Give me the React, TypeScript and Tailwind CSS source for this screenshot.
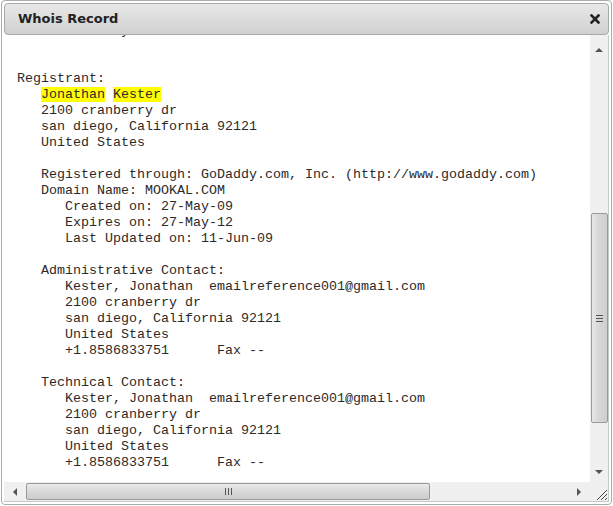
import React from 'react'

const mono = { fontFamily: '"Liberation Mono", "Courier New", monospace' }

type Line = string | React.ReactNode

const lines: Line[] = [
  '             y',
  '',
  '',
  'Registrant:',
  <>
    {'   '}
    <span className="bg-[#ffff00]">Jonathan</span> <span className="bg-[#ffff00]">Kester</span>
  </>,
  '   2100 cranberry dr',
  '   san diego, California 92121',
  '   United States',
  '',
  '   Registered through: GoDaddy.com, Inc. (http://www.godaddy.com)',
  '   Domain Name: MOOKAL.COM',
  '      Created on: 27-May-09',
  '      Expires on: 27-May-12',
  '      Last Updated on: 11-Jun-09',
  '',
  '   Administrative Contact:',
  '      Kester, Jonathan  emailreference001@gmail.com',
  '      2100 cranberry dr',
  '      san diego, California 92121',
  '      United States',
  '      +1.8586833751      Fax --',
  '',
  '   Technical Contact:',
  '      Kester, Jonathan  emailreference001@gmail.com',
  '      2100 cranberry dr',
  '      san diego, California 92121',
  '      United States',
  '      +1.8586833751      Fax --',
  '',
  '',
]

function Arrow({ dir }: { dir: 'up' | 'down' | 'left' | 'right' }) {
  const pts = {
    up: '0,5 4,1 8,5',
    down: '0,1 4,5 8,1',
    left: '5,0 1,4 5,8',
    right: '1,0 5,4 1,8',
  }[dir]
  const vertical = dir === 'up' || dir === 'down'
  return (
    <svg width={vertical ? 8 : 6} height={vertical ? 6 : 8} viewBox={vertical ? '0 0 8 6' : '0 0 6 8'}>
      <polygon points={pts} fill="#555" />
    </svg>
  )
}

export default function App() {
  return (
    <div className="w-[613px] h-[506px] bg-white">
      <div className="ml-[1px] w-[611px] h-[505px] border border-[#aaaaaa] rounded-[4px] p-[2px] flex flex-col bg-white">
        {/* Title bar */}
        <div className="h-[32px] shrink-0 flex items-center justify-between border border-[#aaaaaa] rounded-[4px] bg-gradient-to-b from-[#e8e8e8] to-[#d0d0d0] pl-[13px] pr-[7px]">
          <span
            className="text-[13px] font-bold text-[#222]"
            style={{ fontFamily: '"DejaVu Sans", Verdana, sans-serif' }}
          >
            Whois Record
          </span>
          <svg width="10" height="10" viewBox="0 0 10 10" className="mr-[1px]">
            <path d="M1.5 1.5 L8.5 8.5 M8.5 1.5 L1.5 8.5" stroke="#222" strokeWidth="2.6" strokeLinecap="square" />
          </svg>
        </div>

        {/* Scroll view */}
        <div className="flex-1 flex flex-col min-h-0 border-r border-b border-[#c8c8c8]">
          <div className="flex-1 flex min-h-0">
            <div className="flex-1 overflow-hidden pl-[13px]">
              <pre className="mt-[-12px] text-[13.33px] leading-[16px] text-[#2a2a2a]" style={mono}>
                {lines.map((l, i) => (
                  <div key={i} className="h-[16px] whitespace-pre">
                    {l}
                  </div>
                ))}
              </pre>
            </div>

            {/* Vertical scrollbar */}
            <div className="w-[18px] shrink-0 bg-[#f0f0f0] flex flex-col items-center">
              <div className="h-[17px] w-full flex items-center justify-center mt-[6px]">
                <Arrow dir="up" />
              </div>
              <div className="h-[155px]" />
              <div className="w-[17px] h-[210px] border border-[#9a9a9a] rounded-[2px] bg-gradient-to-r from-[#e6e6e6] via-[#d6d6d6] to-[#cfcfcf] flex items-center justify-center">
                <div className="flex flex-col gap-[2px]">
                  <div className="w-[7px] h-px bg-[#555]" />
                  <div className="w-[7px] h-px bg-[#555]" />
                  <div className="w-[7px] h-px bg-[#555]" />
                </div>
              </div>
              <div className="flex-1" />
              <div className="h-[17px] w-full flex items-center justify-center mb-[2px]">
                <Arrow dir="down" />
              </div>
            </div>
          </div>

          {/* Horizontal scrollbar */}
          <div className="h-[19px] shrink-0 flex">
            <div className="flex-1 bg-[#f0f0f0] flex items-center">
              <div className="w-[22px] h-full flex items-center justify-center">
                <Arrow dir="left" />
              </div>
              <div className="w-[404px] h-[17px] border border-[#9a9a9a] rounded-[2px] bg-gradient-to-b from-[#eaeaea] via-[#d8d8d8] to-[#cdcdcd] flex items-center justify-center">
                <div className="flex gap-[2px]">
                  <div className="w-px h-[7px] bg-[#555]" />
                  <div className="w-px h-[7px] bg-[#555]" />
                  <div className="w-px h-[7px] bg-[#555]" />
                </div>
              </div>
              <div className="flex-1" />
              <div className="w-[22px] h-full flex items-center justify-center">
                <Arrow dir="right" />
              </div>
            </div>
            <div className="w-[18px] shrink-0 bg-[#f0f0f0] flex items-end justify-end">
              <svg width="13" height="13" viewBox="0 0 13 13">
                <path d="M12 2 L2 12 M12 6 L6 12 M12 10 L10 12" stroke="#444" strokeWidth="1" />
              </svg>
            </div>
          </div>
        </div>
      </div>
    </div>
  )
}
